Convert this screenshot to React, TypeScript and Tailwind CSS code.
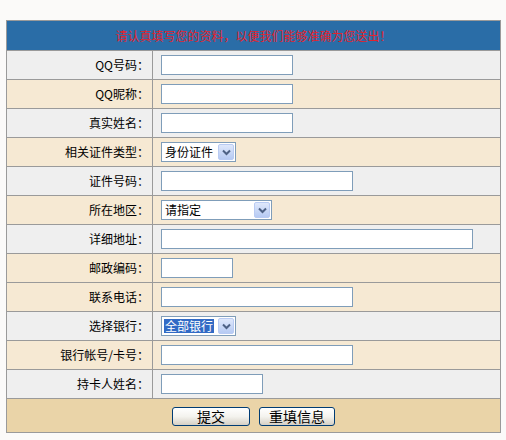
import React from 'react';

type Field =
  | { label: string; kind: 'input'; width: string }
  | { label: string; kind: 'select'; width: string; value: string; selected?: boolean };

const fields: { field: Field; bg: string }[] = [
  { field: { label: 'QQ号码：', kind: 'input', width: 'w-[132px]' }, bg: 'bg-[#efefef]' },
  { field: { label: 'QQ昵称：', kind: 'input', width: 'w-[132px]' }, bg: 'bg-[#f6e9d3]' },
  { field: { label: '真实姓名：', kind: 'input', width: 'w-[132px]' }, bg: 'bg-[#efefef]' },
  { field: { label: '相关证件类型：', kind: 'select', width: 'w-[75px]', value: '身份证件' }, bg: 'bg-[#f6e9d3]' },
  { field: { label: '证件号码：', kind: 'input', width: 'w-[192px]' }, bg: 'bg-[#efefef]' },
  { field: { label: '所在地区：', kind: 'select', width: 'w-[111px]', value: '请指定' }, bg: 'bg-[#f6e9d3]' },
  { field: { label: '详细地址：', kind: 'input', width: 'w-[312px]' }, bg: 'bg-[#efefef]' },
  { field: { label: '邮政编码：', kind: 'input', width: 'w-[72px]' }, bg: 'bg-[#f6e9d3]' },
  { field: { label: '联系电话：', kind: 'input', width: 'w-[192px]' }, bg: 'bg-[#f6e9d3]' },
  { field: { label: '选择银行：', kind: 'select', width: 'w-[75px]', value: '全部银行', selected: true }, bg: 'bg-[#efefef]' },
  { field: { label: '银行帐号/卡号：', kind: 'input', width: 'w-[192px]' }, bg: 'bg-[#f6e9d3]' },
  { field: { label: '持卡人姓名：', kind: 'input', width: 'w-[102px]' }, bg: 'bg-[#efefef]' },
];

const FakeSelect: React.FC<{ width: string; value: string; selected?: boolean }> = ({ width, value, selected }) => (
  <div className={`${width} h-[20px] flex items-center border border-[#7f9db9] bg-white`}>
    <div className="flex-1 flex items-center pl-[2px] min-w-0">
      <span
        className={`px-[1px] leading-[14px] whitespace-nowrap ${
          selected ? 'bg-[#316ac5] text-white' : 'text-black'
        }`}
      >
        {value}
      </span>
    </div>
    <div className="w-[16px] h-[16px] mr-[1px] rounded-[2px] bg-gradient-to-b from-[#dfe8fb] to-[#b6caf3] border border-[#b9cbf3] flex items-center justify-center">
      <svg width="9" height="7" viewBox="0 0 9 7">
        <path d="M1 1.5 L4.5 5 L8 1.5" fill="none" stroke="#4d6185" strokeWidth="2" />
      </svg>
    </div>
  </div>
);

const XpButton: React.FC<{ children: React.ReactNode; width: string }> = ({ children, width }) => (
  <button
    type="button"
    className={`${width} h-[19px] rounded-[3px] border border-[#003c74] bg-gradient-to-b from-white via-[#f4f3ee] to-[#d6d0c5] text-[14px] leading-[16px] text-black`}
  >
    {children}
  </button>
);

export default function App() {
  return (
    <div className="w-[506px] h-[440px] bg-[#fbfaf9] pt-[20px] pl-[6px] text-[12px] text-black font-['Noto_Sans_CJK_SC','Liberation_Sans',sans-serif]">
      <div className="w-[495px] border border-[#9a9a9a] flex flex-col">
        {/* 标题栏 */}
        <div className="h-[30px] bg-[#2a6da7] border-b border-[#9a9a9a] flex items-center justify-center text-[#e3232d] text-[12px] font-normal">
          请认真填写您的资料，以便我们能够准确为您送出！
        </div>

        {fields.map(({ field, bg }) => (
          <div key={field.label} className={`h-[29px] flex border-b border-[#9a9a9a] ${bg}`}>
            <div className="w-[146px] border-r border-[#9a9a9a] flex items-center justify-end pr-[3px] whitespace-nowrap">
              {field.label}
            </div>
            <div className="flex-1 flex items-center pl-[8px]">
              {field.kind === 'input' ? (
                <input type="text" className={`${field.width} h-[20px] border border-[#7f9db9] bg-white outline-none`} />
              ) : (
                <FakeSelect width={field.width} value={field.value} selected={field.selected} />
              )}
            </div>
          </div>
        ))}

        {/* 按钮 */}
        <div className="h-[33px] bg-[#ead4a8] flex items-center justify-center gap-[9px] pt-[1px]">
          <XpButton width="w-[78px]">提交</XpButton>
          <XpButton width="w-[76px]">重填信息</XpButton>
        </div>
      </div>
    </div>
  );
}
